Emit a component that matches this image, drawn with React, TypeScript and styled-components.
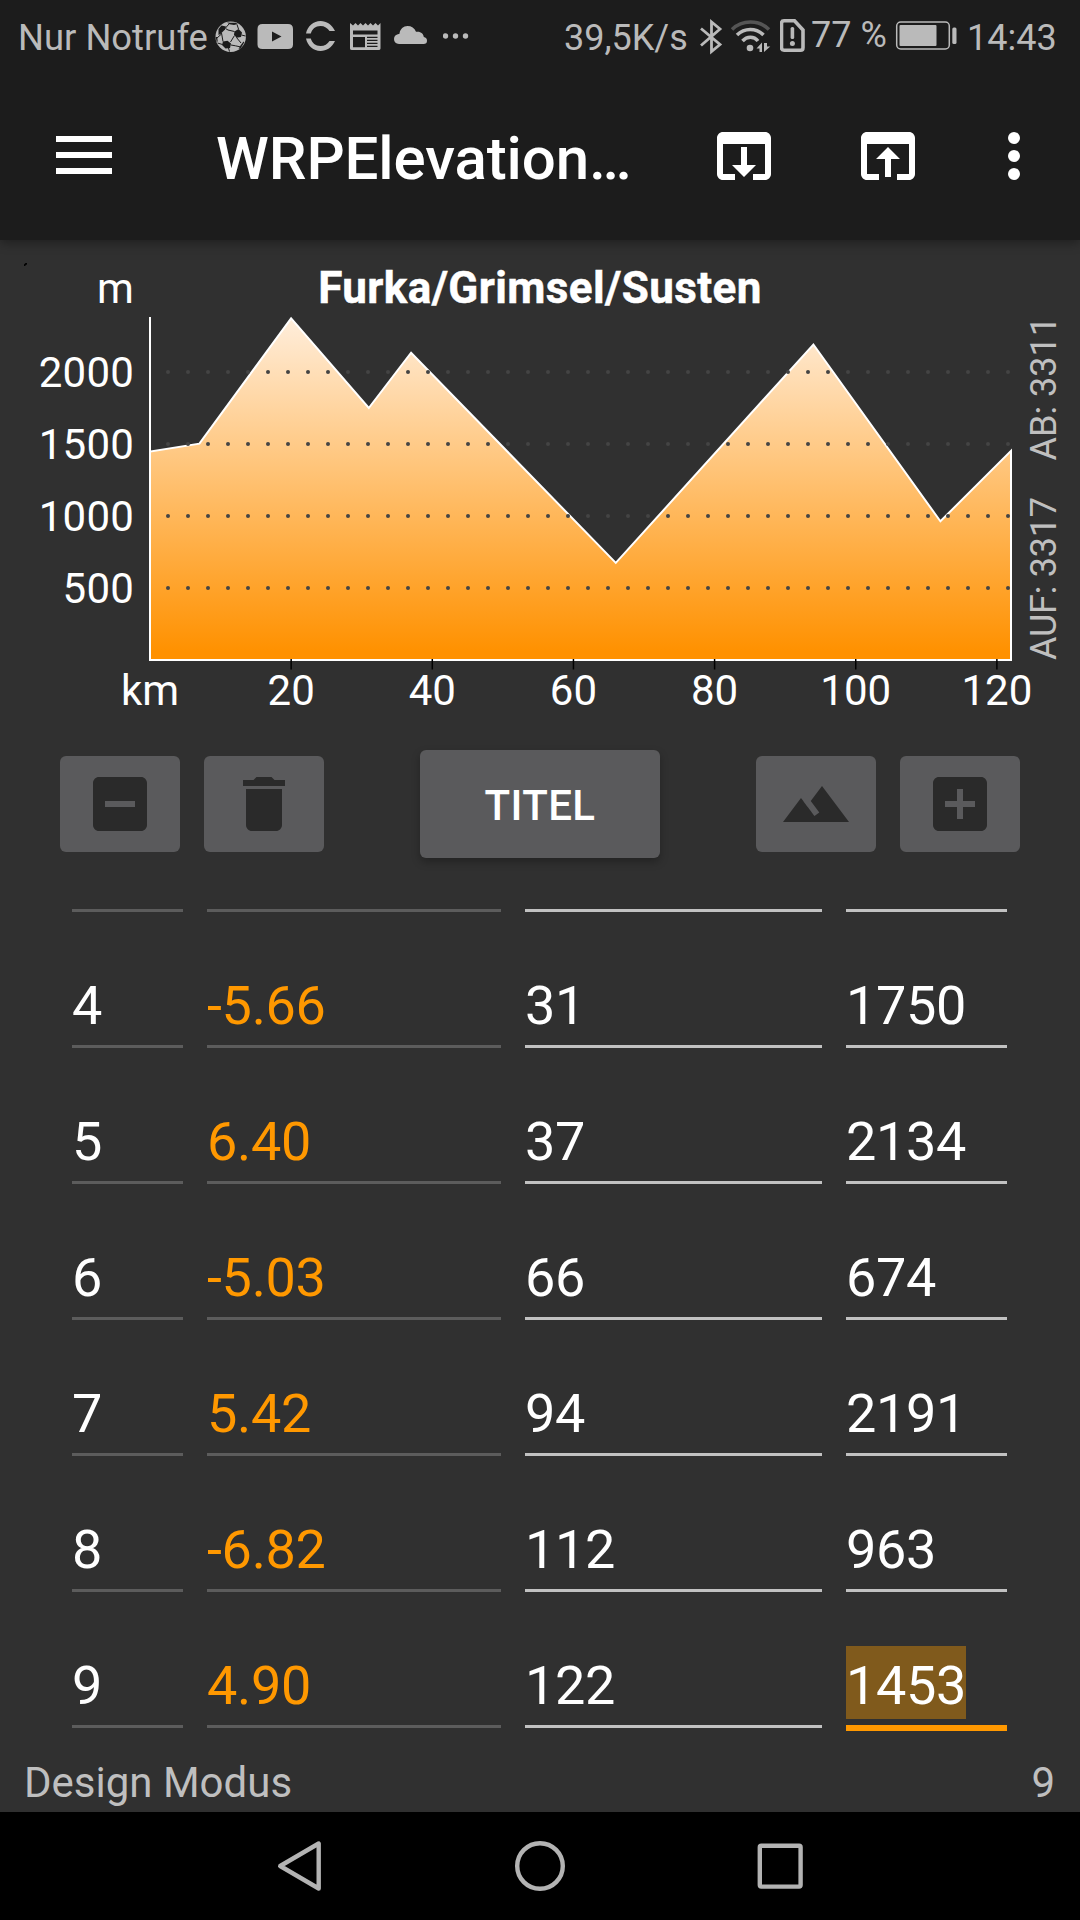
import React from "react";
import styled, { createGlobalStyle } from "styled-components";

const GlobalStyle = createGlobalStyle`
  *, *::before, *::after { box-sizing: border-box; }
  body { margin: 0; background: #303030; }
`;

const Screen = styled.div`
  width: 1080px;
  height: 1920px;
  display: flex;
  flex-direction: column;
  overflow: hidden;
  background: #303030;
  color: #fff;
  font-family: Roboto, "Noto Sans", sans-serif;
`;

const Header = styled.header`
  flex: none;
  height: 240px;
  background: #1c1c1c;
  box-shadow: 0 3px 10px rgba(0, 0, 0, 0.35);
  z-index: 1;
`;

const StatusBar = styled.div`
  display: flex;
  align-items: flex-start;
  height: 72px;
  padding-left: 18px;
  color: #bababa;
`;

const StatusText = styled.span<{ $width: number; $before?: number; $line?: number; $size?: number }>`
  flex: none;
  width: ${(p) => p.$width}px;
  margin-left: ${(p) => p.$before ?? 0}px;
  font-size: ${(p) => p.$size ?? 36}px;
  line-height: ${(p) => p.$line ?? 76}px;
  white-space: pre;
`;

const StatusSvg = styled.svg<{ $before: number }>`
  flex: none;
  height: 72px;
  margin-left: ${(p) => p.$before}px;
  fill: #bababa;
`;

const AppBar = styled.div`
  display: flex;
  align-items: center;
  height: 168px;
  padding: 0 30px 0 56px;
`;

const MenuButton = styled.div`
  display: flex;
  flex-direction: column;
  gap: 10px;
  width: 56px;
  margin-top: -2px;
`;

const MenuBar = styled.span`
  height: 6px;
  background: #fff;
`;

const Title = styled.h1`
  flex: 1;
  margin: 5px 0 0 104px;
  font-size: 60px;
  font-weight: 500;
  line-height: 72px;
  letter-spacing: -0.1px;
  white-space: nowrap;
`;

const Actions = styled.div`
  display: flex;
  gap: 72px;
`;

const Icon = styled.svg`
  display: block;
  width: 72px;
  height: 72px;
  fill: currentColor;
`;

const Overflow = styled.div`
  margin-left: 54px;
`;

const ChartSvg = styled.svg`
  display: block;
  flex: none;
  width: 1080px;
  height: 500px;
  font-family: Roboto, "Noto Sans", sans-serif;
`;

const Toolbar = styled.div`
  display: flex;
  align-items: center;
  justify-content: space-between;
  height: 128px;
  padding: 0 60px;
`;

const ButtonPair = styled.div`
  display: flex;
  gap: 24px;
`;

const IconButton = styled.div`
  display: flex;
  align-items: center;
  justify-content: center;
  width: 120px;
  height: 96px;
  border-radius: 6px;
  background: #5a5a5c;
  color: #2a2a2a;
`;

const TitleButton = styled.div`
  width: 240px;
  height: 108px;
  border-radius: 6px;
  background: #5a5a5c;
  box-shadow: 0 4px 8px rgba(0, 0, 0, 0.28);
  font-size: 42px;
  font-weight: 500;
  line-height: 111px;
  letter-spacing: 0.4px;
  text-align: center;
`;

const List = styled.div`
  flex: none;
  height: 863px;
  padding: 0 73px 0 72px;
  overflow: hidden;
`;

const Row = styled.div<{ $height: number }>`
  display: grid;
  grid-template-columns: 111px 294px 297px 161px;
  column-gap: 24px;
  align-items: end;
  height: ${(p) => p.$height}px;
`;

const Cell = styled.div<{ $line: string; $color?: string; $focused?: boolean }>`
  height: ${(p) => (p.$focused ? 85 : 82)}px;
  margin-bottom: ${(p) => (p.$focused ? -3 : 0)}px;
  border-bottom: ${(p) => (p.$focused ? 6 : 3)}px solid ${(p) => p.$line};
  color: ${(p) => p.$color ?? "#fff"};
`;

const BlankCell = styled.div<{ $line: string }>`
  height: 40px;
  border-bottom: 3px solid ${(p) => p.$line};
`;

const Value = styled.span<{ $selected?: boolean }>`
  display: inline-block;
  vertical-align: top;
  height: 73px;
  font-size: 54px;
  line-height: 79px;
  letter-spacing: -0.32px;
  background: ${(p) => (p.$selected ? "#805a1c" : "transparent")};
`;

const Footer = styled.footer`
  display: flex;
  justify-content: space-between;
  flex: none;
  height: 81px;
  padding: 0 25px 0 24px;
  color: #bfbfbf;
  font-size: 42px;
  line-height: 103px;
`;

const NavBar = styled.nav`
  display: flex;
  flex: none;
  align-items: center;
  justify-content: center;
  gap: 168px;
  height: 108px;
  background: #000;
`;

const NavIcon = styled.svg`
  width: 72px;
  height: 72px;
  fill: none;
  stroke: #b3b3b3;
  stroke-width: 4.4;
  stroke-linejoin: round;
`;

const DIM = "#5c5c5c";
const BRIGHT = "#c1c1c1";

const profile: [number, number][] = [
  [0, 1447],
  [7, 1502],
  [20, 2373],
  [31, 1750],
  [37, 2134],
  [66, 674],
  [94, 2191],
  [112, 963],
  [122, 1453],
];

const slopes: Record<number, string> = {
  4: "-5.66",
  5: "6.40",
  6: "-5.03",
  7: "5.42",
  8: "-6.82",
  9: "4.90",
};

const px = (km: number) => 150 + (km * 861) / 122;
const py = (m: number) => 660 - m * 0.144;

function Chart() {
  const ridge = profile.map(([km, m]) => `${px(km).toFixed(1)},${py(m).toFixed(1)}`).join(" L");
  return (
    <ChartSvg viewBox="0 240 1080 500">
      <defs>
        <linearGradient id="slope" gradientUnits="userSpaceOnUse" x1="0" y1="317" x2="0" y2="652">
          <stop offset="0" stopColor="#ffeedc" />
          <stop offset="1" stopColor="#ff9100" />
        </linearGradient>
      </defs>
      <path d="M24 266v-1.5l1.5-1.5h1.5v1.500l-1.500.5v1z" fill="#000" />
      <path d={`M150,660 L${ridge} L1011,660 Z`} fill="url(#slope)" stroke="#fff" strokeWidth="2" />
      {[500, 1000, 1500, 2000].map((m) =>
        Array.from({ length: 43 }, (_, i) => (
          <circle key={`${m}-${i}`} cx={168 + i * 20} cy={py(m)} r="2" fill="#444" />
        ))
      )}
      <path d="M150 317V660" stroke="#fff" strokeWidth="2" />
      {[20, 40, 60, 80, 100, 120].map((km) => (
        <path key={km} d={`M${px(km)} 659v10.5`} stroke="#000" strokeWidth="1.5" />
      ))}
      <g fill="#fff" fontSize="42">
        <text
          x="540"
          y="302.5"
          textAnchor="middle"
          fontSize="44"
          fontWeight="700"
          letterSpacing="0.4"
          stroke="#fff"
          strokeWidth="0.5"
        >
          Furka/Grimsel/Susten
        </text>
        <g textAnchor="end" letterSpacing="0.2">
          <text x="134" y="303">m</text>
          {[500, 1000, 1500, 2000].map((m) => (
            <text key={m} x="134" y={py(m) + 15}>
              {m}
            </text>
          ))}
        </g>
        <g textAnchor="middle">
          <text x="150" y="705">km</text>
          {[20, 40, 60, 80, 100, 120].map((km) => (
            <text key={km} x={px(km)} y="705">
              {km}
            </text>
          ))}
        </g>
      </g>
      <g fill="#bfbfbf" fontSize="36">
        <text transform="translate(1056 660) rotate(-90)" letterSpacing="-0.25">
          AUF: 3317
        </text>
        <text transform="translate(1056 460.5) rotate(-90)">AB: 3311</text>
      </g>
    </ChartSvg>
  );
}

function Status() {
  return (
    <StatusBar>
      <StatusText $width={192} $size={36.4}>Nur Notrufe</StatusText>
      <StatusSvg $before={5} width={31} viewBox="215 0 31 72">
        <circle cx="230.7" cy="36.7" r="15.200" />
        <g fill="#1c1c1c">
          <path d="M218.500 29l3-3.500 4.500 1-1 3-4.500 4.500-2 1z" />
          <path d="M234.500 31.500l4-2.500 3.500 3.500-1 4.500-4.500.8-2.500-3.300z" />
          <path d="M223 41.500l4.500-.8 3.500 2.800-1 4.500-4.500.5-3.500-3.500z" />
          <path d="M227 22.500l3 .2 5.500 0 2.500 1.300-4 1-4.500-.8z" />
          <path d="M243.500 41.500l.8.8-3.500 6-2.300.7 2-3.500z" />
          <path d="M215.700 37l1.500 0 .5 4.500-1 .5z" />
        </g>
        <g stroke="#1c1c1c" strokeWidth="1" fill="none">
          <path d="M225.500 28l3.500-4M225.500 28.500l2.500 1.500 6.500 1.500M237 24.500l1.500 4.500M221.500 33l1.500 8.500M217 38l4.500-4M234.500 35.500l-4 6.500M236.500 37.500l4.500 5.500M241.500 35l4 1M231 45l4.500.8 4.500 1M222.500 44.500l-5-1.500M228.500 48l1 3.500" />
        </g>
      </StatusSvg>
      <StatusSvg $before={11} width={36} viewBox="257 0 36 72">
        <path
          fillRule="evenodd"
          d="M262.500 24h25.500q5 0 5 5v15.500q0 4.500-5 4.500h-25.500q-5 0-5-4.500v-15.500q0-5 5-5zM272 31.500v10l9.500-5z"
        />
      </StatusSvg>
      <StatusSvg $before={13} width={30} viewBox="306 0 30 72">
        <path d="M306 33.500C307.500 26 313.500 21 320.500 21c6 0 11.500 3.500 14.500 10h-5.500c-2-3-5-5-9-5-5 0-8.500 3-9.700 7.500z" />
        <path d="M306 38.500C307.500 46 313.500 51 320.500 51c6 0 11.500-3.500 14.500-10h-5.500c-2 3-5 5-9 5-5 0-8.500-3-9.700-7.500z" />
      </StatusSvg>
      <StatusSvg $before={14} width={31} viewBox="350 0 31 72">
        <path
          fillRule="evenodd"
          d="M350 23l3 2.500 2.500-2.500 2.500 2.500 2.500-2.500 2.500 2.500 2.500-2.500 2.500 2.500 2.500-2.500 2.500 2.500 2.500-2.500 2.500 2.500 2.500-2.500v25.500q0 1.500-2 1.500h-26.500q-2 0-2-1.500zM353 30.500v4h24.500v-4zM353 37v10.200h12V37zM367 36.800v1.300h10.500v-1.300zM367 39.800v1.300h10.500v-1.300zM367 42.800v1.300h10.500v-1.300zM367 45.800v1.300h10.500v-1.300z"
        />
      </StatusSvg>
      <StatusSvg $before={13} width={33} viewBox="394 0 33 72">
        <path d="M399 44q-5-.5-5-5t5.500-5.300C400 29 403.500 26 407.500 26c4 0 7 2 8.500 5.800 4.500-.8 7.500 1.700 7.800 5.200q3.200.6 3.200 3.700 0 3.300-3.500 3.300z" />
      </StatusSvg>
      <StatusSvg $before={16} width={26} viewBox="443 0 26 72">
        <circle cx="445.500" cy="36" r="2.700" />
        <circle cx="455.500" cy="36" r="2.700" />
        <circle cx="465.500" cy="36" r="2.700" />
      </StatusSvg>
      <StatusText $before={95} $width={125}>39,5K/s</StatusText>
      <StatusSvg $before={11} width={23} viewBox="700 0 23 72">
        <path
          d="M701 28.500L720 44.500 711.500 51.500V22L720 29 701 45.500"
          fill="none"
          stroke="#bababa"
          strokeWidth="2.800"
        />
      </StatusSvg>
      <StatusSvg $before={8} width={40} viewBox="731 0 40 72">
        <g fill="none" strokeWidth="3.500">
          <path d="M732 29.500C742 19.500 759 19.500 769 29.500" stroke="#555" />
          <path d="M737 35C744.500 27.500 756 27.500 763.500 35" stroke="#bababa" />
          <path d="M742.500 41C747 36 754 36 758 41" stroke="#bababa" />
        </g>
        <circle cx="750" cy="48" r="3.300" />
        <path d="M756.500 48.500l5.500-6v9.500h-2.500v-3.500zM764 43v9l6.300-5.500h-3.300v-3.500z" />
      </StatusSvg>
      <StatusSvg $before={9} width={26} viewBox="780 0 26 72">
        <path
          d="M784 20.800h10.500l8.500 9.200v17.500q0 2.800-2.500 2.800h-16.500q-2.500 0-2.500-2.800v-24q0-2.700 2.500-2.700z"
          fill="none"
          stroke="#bababa"
          strokeWidth="3.600"
        />
        <rect x="790.600" y="27" width="3.600" height="12" rx="1.600" />
        <circle cx="792.400" cy="43.500" r="2.500" />
      </StatusSvg>
      <StatusText $before={5} $width={77} $line={70}>77 %</StatusText>
      <StatusSvg $before={7} width={62} viewBox="895 0 62 72">
        <rect x="896.700" y="22" width="52.600" height="27" rx="4" fill="none" stroke="#bababa" strokeWidth="1.500" />
        <rect x="899.500" y="25" width="37" height="21" rx="1" />
        <rect x="952.300" y="27.500" width="4.200" height="16.500" rx="1.500" />
      </StatusSvg>
      <StatusText $before={10} $width={92}>14:43</StatusText>
    </StatusBar>
  );
}

const FRAME =
  "M19 4H5c-1.110 0-2 .9-2 2v12c0 1.100.89 2 2 2h4v-2H5V8h14v10h-4v2h4c1.100 0 2-.9 2-2V6c0-1.100-.89-2-2-2z";

export default function App() {
  return (
    <>
      <GlobalStyle />
      <Screen>
        <Header>
          <Status />
          <AppBar>
            <MenuButton>
              <MenuBar />
              <MenuBar />
              <MenuBar />
            </MenuButton>
            <Title>WRPElevation…</Title>
            <Actions>
              <Icon viewBox="0 0 24 24">
                <path d={FRAME} />
                <path d="M11 9v6H8l4 4 4-4h-3V9z" />
              </Icon>
              <Icon viewBox="0 0 24 24">
                <path d={FRAME} />
                <path d="M12 9l-4 4h3v6h2v-6h3z" />
              </Icon>
            </Actions>
            <Overflow>
              <Icon viewBox="0 0 24 24">
                <circle cx="12" cy="6" r="2" />
                <circle cx="12" cy="12" r="2" />
                <circle cx="12" cy="18" r="2" />
              </Icon>
            </Overflow>
          </AppBar>
        </Header>

        <Chart />

        <Toolbar>
          <ButtonPair>
            <IconButton>
              <Icon viewBox="0 0 24 24">
                <path d="M19 3H5c-1.100 0-2 .9-2 2v14c0 1.100.9 2 2 2h14c1.100 0 2-.9 2-2V5c0-1.100-.9-2-2-2zm-2 10H7v-2h10v2z" />
              </Icon>
            </IconButton>
            <IconButton>
              <Icon viewBox="0 0 24 24">
                <path d="M6 19c0 1.100.9 2 2 2h8c1.100 0 2-.9 2-2V7H6v12zM19 4h-3.500l-1-1h-5l-1 1H5v2h14V4z" />
              </Icon>
            </IconButton>
          </ButtonPair>
          <TitleButton>TITEL</TitleButton>
          <ButtonPair>
            <IconButton>
              <Icon viewBox="0 0 24 24">
                <path d="M14 6l-3.750 5 2.850 3.800-1.600 1.200C9.810 13.750 7 10 7 10l-6 8h22L14 6z" />
              </Icon>
            </IconButton>
            <IconButton>
              <Icon viewBox="0 0 24 24">
                <path d="M19 3H5c-1.100 0-2 .9-2 2v14c0 1.100.9 2 2 2h14c1.100 0 2-.9 2-2V5c0-1.100-.9-2-2-2zm-2 10h-4v4h-2v-4H7v-2h4V7h2v4h4v2z" />
              </Icon>
            </IconButton>
          </ButtonPair>
        </Toolbar>

        <List>
          <Row $height={44}>
            <BlankCell $line={DIM} />
            <BlankCell $line={DIM} />
            <BlankCell $line={BRIGHT} />
            <BlankCell $line={BRIGHT} />
          </Row>
          {profile.map(([km, m], i) => {
            const n = i + 1;
            if (n < 4) return null;
            const active = n === 9;
            return (
              <Row key={n} $height={136}>
                <Cell $line={DIM}>
                  <Value>{n}</Value>
                </Cell>
                <Cell $line={DIM} $color="#ff9800">
                  <Value>{slopes[n]}</Value>
                </Cell>
                <Cell $line={BRIGHT}>
                  <Value>{km}</Value>
                </Cell>
                <Cell $line={active ? "#ff9800" : BRIGHT} $focused={active}>
                  <Value $selected={active}>{m}</Value>
                </Cell>
              </Row>
            );
          })}
        </List>

        <Footer>
          <span>Design Modus</span>
          <span>9</span>
        </Footer>

        <NavBar>
          <NavIcon viewBox="0 0 72 72">
            <path d="M16.200 36L54.700 13.500v45z" />
          </NavIcon>
          <NavIcon viewBox="0 0 72 72">
            <circle cx="36" cy="36" r="22.800" />
          </NavIcon>
          <NavIcon viewBox="0 0 72 72">
            <rect x="15.800" y="15.800" width="40.800" height="40.800" rx="1.500" />
          </NavIcon>
        </NavBar>
      </Screen>
    </>
  );
}
